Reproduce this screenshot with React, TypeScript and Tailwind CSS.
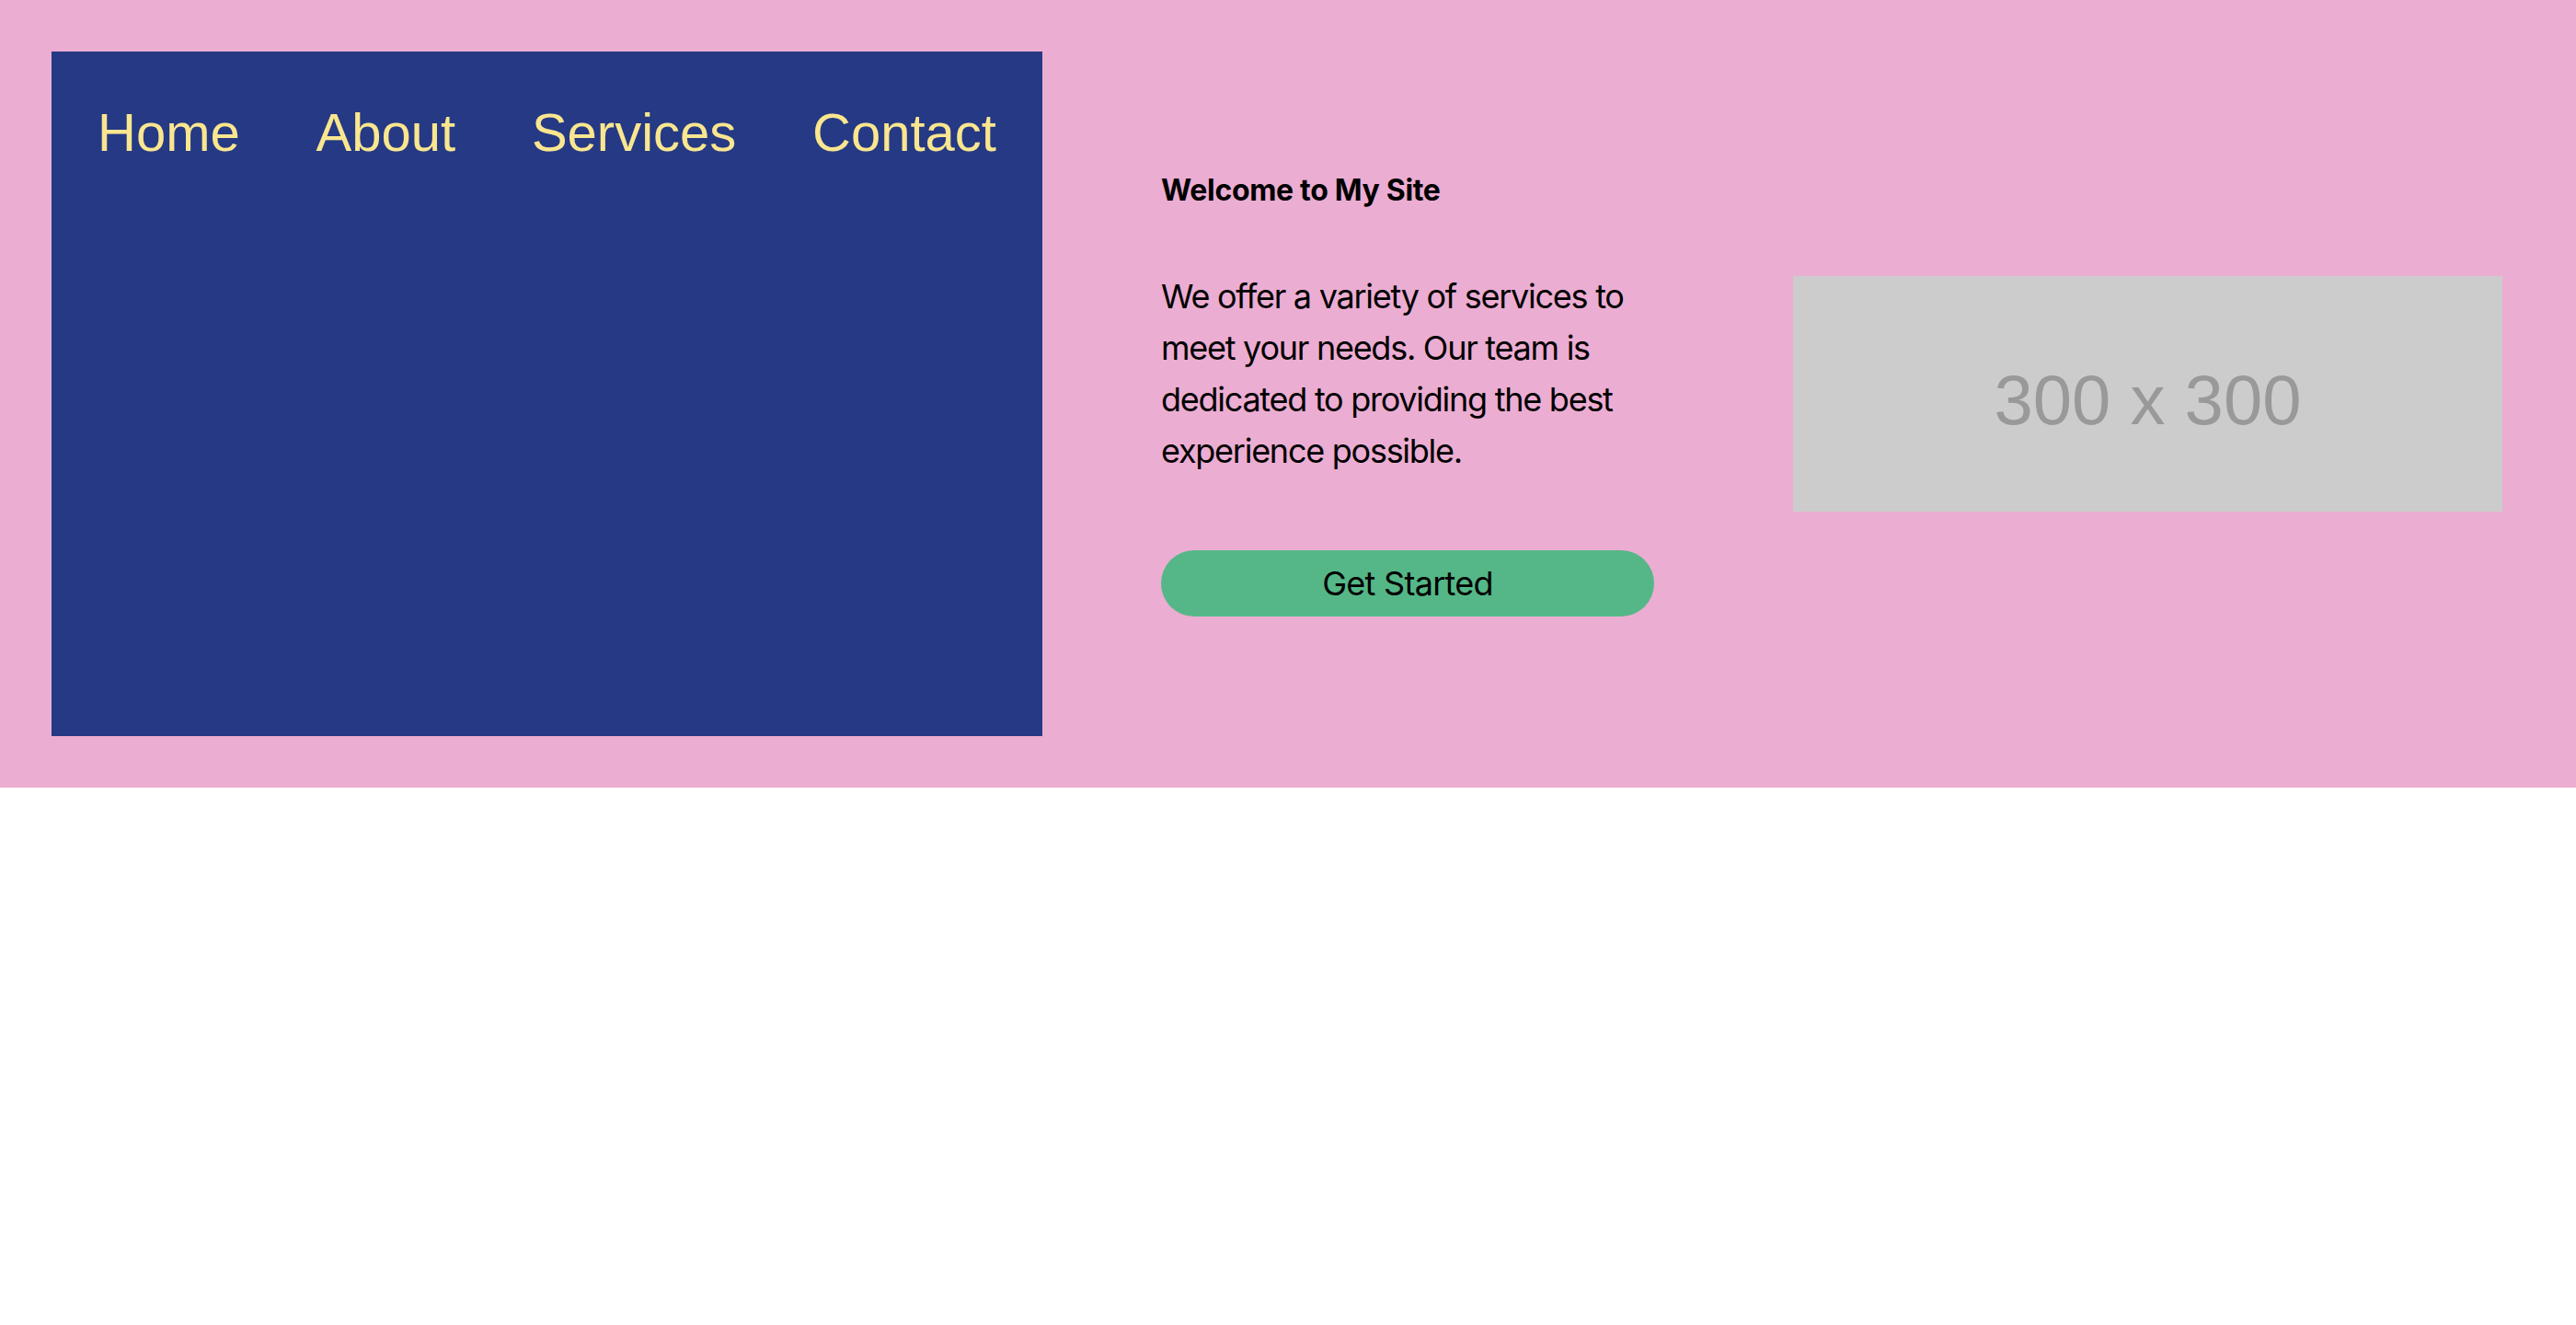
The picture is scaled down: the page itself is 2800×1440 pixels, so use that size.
import React from 'react';

const links = ['Home', 'About', 'Services', 'Contact'];

export default function App() {
  return (
    <div className="min-h-screen bg-white">
      <header className="flex items-center bg-[#ecadd2] p-[56px]">
        {/* nav panel */}
        <nav className="h-[744px] w-[1077px] shrink-0 self-start bg-[#253984] px-[50px] pt-[44px]">
          <ul
            className="flex justify-between text-[58px] text-[#f9e68f]"
            style={{ fontFamily: '"Liberation Sans", Arial, sans-serif' }}
          >
            {links.map((l) => (
              <li key={l}>
                <a href="#">{l}</a>
              </li>
            ))}
          </ul>
        </nav>

        <div
          className="ml-[129px] flex w-[536px] shrink-0 flex-col text-black"
          style={{ fontFamily: 'Inter, "Noto Sans", sans-serif' }}
        >
          <h2 className="mb-[67px] text-[32px] font-bold leading-[40px] tracking-[-0.01em]">
            Welcome to My Site
          </h2>
          <p className="mb-[80px] text-[36px] leading-[56px] tracking-[-0.035em]">
            We offer a variety of services to meet your needs. Our team is dedicated to providing the
            best experience possible.
          </p>
          <button className="h-[72px] w-full rounded-full bg-[#55b787] text-[36px] tracking-[-0.02em]">
            Get Started
          </button>
        </div>

        <div
          className="ml-[151px] flex h-[256px] w-[771px] shrink-0 items-center justify-center bg-[#cccccc] pt-[14px] text-[76px] text-[#999999]"
          style={{ fontFamily: '"Liberation Sans", Arial, sans-serif' }}
        >
          300 x 300
        </div>
      </header>
    </div>
  );
}
